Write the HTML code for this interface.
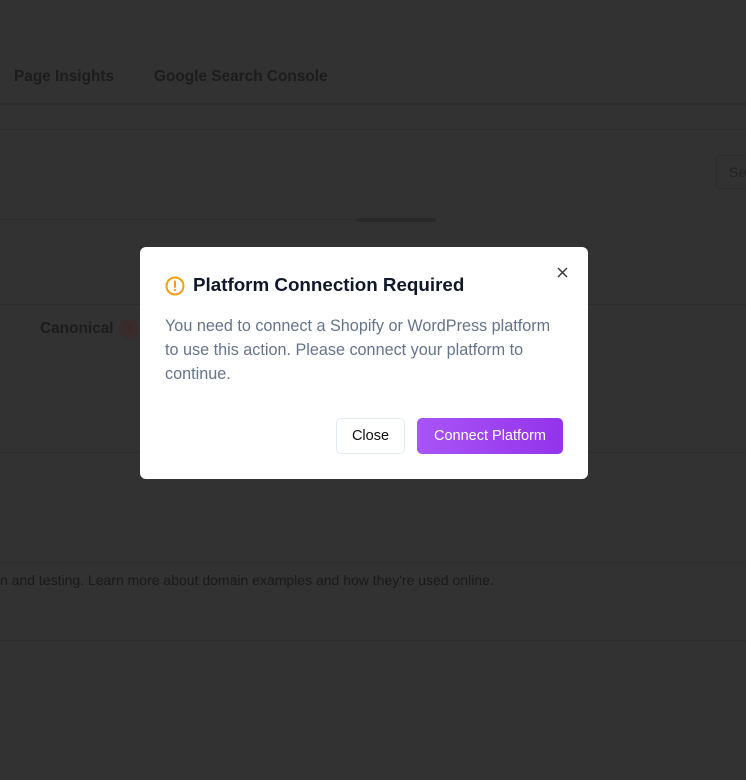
<!DOCTYPE html>
<html><head><meta charset="utf-8"><style>
*{margin:0;padding:0;box-sizing:border-box}
body{width:746px;height:780px;overflow:hidden;background:#323232;font-family:"Liberation Sans","DejaVu Sans",sans-serif;position:relative}
.a{position:absolute}
.line{position:absolute;left:0;width:746px;height:1px;background:#2c2c2c}
.bg{color:#1c1c1c;font-weight:bold;font-size:15.4px}
.modal{position:absolute;left:140px;top:247px;width:448px;height:232px;background:#fff;border-radius:6px}
</style></head><body>
<div class="a bg" style="left:14px;top:68px">Page Insights</div>
<div class="a bg" style="left:154px;top:68px">Google Search Console</div>
<div class="line" style="top:103px;height:2px"></div>
<div class="line" style="top:129px"></div>
<div class="a" style="left:716px;top:155px;width:40px;height:34px;border:1px solid #2c2c2c;border-radius:5px;color:#222;font-size:14px;padding:8px 0 0 12px">Se</div>
<div class="a" style="left:356px;top:218px;width:80px;height:4px;background:#2a2a2a;border-radius:2px"></div>
<div class="line" style="top:219px;width:356px"></div>
<div class="line" style="top:304px"></div>
<div class="a bg" style="left:-6px;top:320px">t</div>
<div class="a bg" style="left:40px;top:320px">Canonical</div>
<div class="a" style="left:119px;top:319px;width:20px;height:20px;border-radius:10px;background:#382c2c;color:#4a2020;font-size:11px;text-align:center;line-height:20px">1</div>
<div class="line" style="top:452px"></div>
<div class="line" style="top:562px"></div>
<div class="a" style="left:0;top:572px;color:#1a1a1a;font-size:14px">n and testing. Learn more about domain examples and how they're used online.</div>
<div class="line" style="top:640px"></div>

<div class="modal">
<svg class="a" style="left:25px;top:29px" width="20" height="20" viewBox="0 0 20 20"><circle cx="10" cy="10" r="8.5" fill="none" stroke="#f59e0b" stroke-width="2"/><path d="M10 5.5v5.5" stroke="#f59e0b" stroke-width="2" stroke-linecap="round"/><circle cx="10" cy="14" r="1.1" fill="#f59e0b"/></svg>
<div class="a" style="left:53px;top:27px;font-size:18.8px;font-weight:bold;color:#0f172a">Platform Connection Required</div>
<svg class="a" style="left:416px;top:19px" width="13" height="13" viewBox="0 0 13 13"><path d="M2 2l9 9M11 2l-9 9" stroke="#333" stroke-width="1.4"/></svg>
<div class="a" style="left:25px;top:67px;width:392px;font-size:16.2px;line-height:24px;color:#64748b">You need to connect a Shopify or WordPress platform to use this action. Please connect your platform to continue.</div>
<div class="a" style="left:196px;top:171px;width:69px;height:36px;border:1px solid #e2e8f0;border-radius:5px;font-size:14.5px;color:#111;text-align:center;line-height:34px">Close</div>
<div class="a" style="left:277px;top:171px;width:146px;height:36px;border-radius:5px;background:linear-gradient(90deg,#a855f7,#9333ea);font-size:14.5px;color:#fff;text-align:center;line-height:36px">Connect Platform</div>
</div>
</body></html>
